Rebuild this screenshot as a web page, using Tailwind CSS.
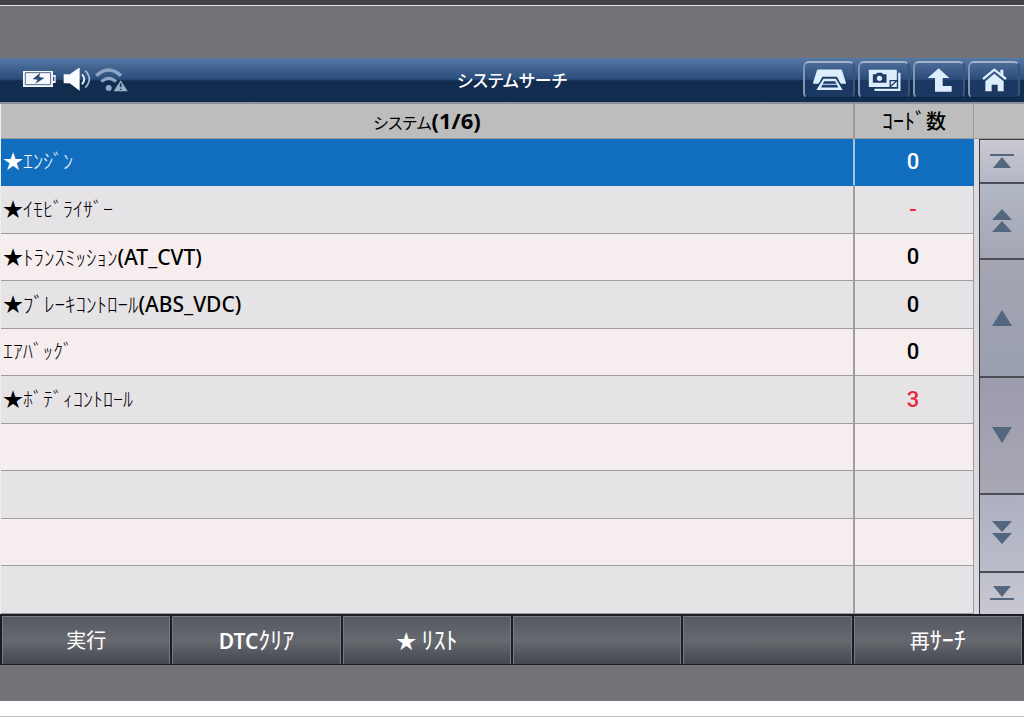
<!DOCTYPE html>
<html lang="ja">
<head>
  <meta charset="UTF-8"/>
  <meta name="viewport" content="width=device-width, initial-scale=1.0"/>
  <title>システムサーチ</title>
  <script src="https://cdn.jsdelivr.net/npm/@tailwindcss/browser@4"></script>
</head>
<body class="flex min-h-screen flex-col bg-white font-['Noto_Sans','Noto_Sans_CJK_JP',sans-serif] text-black">
  <div class="h-[6px] border-b border-[#e4e4e4] bg-[#424143]"></div>
  <div class="bg-[#727377] pt-[52px] pb-[36px]">

    <!-- title bar -->
    <header class="grid h-[46px] grid-cols-[1fr_auto_1fr] items-center border-b-2 border-[#8b9099] bg-linear-to-b from-[#5578a4] from-0% via-[#2a4d7b] via-48% to-[#122c50] to-52%">
      <div class="flex h-full items-center gap-[7px] pl-[22px]">
        <svg class="h-[18px] w-[34px]" viewBox="66 212 102 54" role="img" aria-label="バッテリー">
          <path d="M69 210h90v14h8v24h-8v12H69z" fill="#f4f8fc"/>
          <path d="M76 217h76v36H76z" fill="none" stroke="#54698a" stroke-width="3"/>
          <path d="M159 229h4v13h-4z" fill="#34507a"/>
          <path d="M120 218l-22 18 15 2-7 12 27-17-15-3z" fill="#2a4775"/>
        </svg>
        <svg class="h-[24px] w-[28px]" viewBox="190 201 84 72" role="img" aria-label="音量">
          <path d="M192 220h18l30-21v70l-30-22h-18z" fill="#f8fbff"/>
          <path d="M247 220q14 14 0 30" fill="none" stroke="#dfe9f5" stroke-width="6"/>
          <path d="M257 209q24 25 0 51" fill="none" stroke="#a9bcd4" stroke-width="5"/>
        </svg>
        <svg class="-ml-[3px] h-[24px] w-[33px]" viewBox="284 203 99 72" role="img" aria-label="Wi-Fi">
          <path d="M288 226q37-34 74 0" fill="none" stroke="#8ea5c3" stroke-width="10"/>
          <path d="M303 244q22-20 44 0" fill="none" stroke="#8ea5c3" stroke-width="9"/>
          <circle cx="325" cy="263" r="9" fill="#8ea5c3"/>
          <path d="M361 240l21 33h-42z" fill="#9bb0cb"/>
          <path d="M361 249v12M361 265v4" stroke="#1d3960" stroke-width="5"/>
        </svg>
      </div>
      <h1 class="pt-[2px] text-[17px] leading-[24px] font-medium text-white [font-feature-settings:'palt']">システムサーチ</h1>
      <nav class="flex justify-end gap-[3px] pr-[4px]">
        <button type="button" aria-label="印刷" class="flex h-[38px] w-[52px] items-center justify-center rounded-[6px] border-2 border-t-[#a3b4cb] border-r-[#3a5377] border-b-[#0e2444] border-l-[#8296b4] bg-linear-to-b from-[#4a6a97] from-0% via-[#2c4c7a] via-48% to-[#1b3862] to-52%">
          <svg class="h-[22px] w-[33px]" viewBox="70 60 98 64">
            <path d="M84 63h70l12 38H72z" fill="#dcedfb" stroke="#dcedfb" stroke-width="4" stroke-linejoin="round"/>
            <path d="M98 82h43l12 22H86z" fill="#1f3d69"/>
            <path d="M101 88h37l20 34H80z" fill="#dcedfb"/>
            <path d="M103 96h33l9 18H94z" fill="#1f3d69"/>
            <path d="M98 105h43" stroke="#a9c0da" stroke-width="4"/>
          </svg>
        </button>
        <button type="button" aria-label="画像保存" class="flex h-[38px] w-[52px] items-center justify-center rounded-[6px] border-2 border-t-[#a3b4cb] border-r-[#3a5377] border-b-[#0e2444] border-l-[#8296b4] bg-linear-to-b from-[#4a6a97] from-0% via-[#2c4c7a] via-48% to-[#1b3862] to-52%">
          <svg class="h-[23px] w-[33px]" viewBox="236 55 98 69">
            <path d="M326 66h7v55h-78v-7h71z" fill="#dcedfb"/>
            <path d="M240 57h80q2 0 2 2v50h-82q-2 0-2-2V59q0-2 2-2z" fill="#dcedfb"/>
            <path d="M250 71h9l4-5h14l4 5h10v25h-41z" fill="#1f3d69"/>
            <circle cx="270" cy="83" r="8" fill="#dcedfb"/>
            <path d="M302 108V90h20z" fill="#dcedfb" stroke="#1f3d69" stroke-width="4"/>
          </svg>
        </button>
        <button type="button" aria-label="戻る" class="flex h-[38px] w-[52px] items-center justify-center rounded-[6px] border-2 border-t-[#a3b4cb] border-r-[#3a5377] border-b-[#0e2444] border-l-[#8296b4] bg-linear-to-b from-[#4a6a97] from-0% via-[#2c4c7a] via-48% to-[#1b3862] to-52%">
          <svg class="h-[24px] w-[25px]" viewBox="418 52 75 72">
            <path d="M453 53l32 29h-20v24h27v17h-50V82h-22z" fill="#dcedfb"/>
          </svg>
        </button>
        <button type="button" aria-label="ホーム" class="flex h-[38px] w-[52px] items-center justify-center rounded-[6px] border-2 border-t-[#a3b4cb] border-r-[#3a5377] border-b-[#0e2444] border-l-[#8296b4] bg-linear-to-b from-[#4a6a97] from-0% via-[#2c4c7a] via-48% to-[#1b3862] to-52%">
          <svg class="h-[24px] w-[25px]" viewBox="578 52 75 72">
            <path d="M581 85l34-28 35 28" fill="none" stroke="#dcedfb" stroke-width="7"/>
            <path d="M633 57h9v20l-9-7z" fill="#dcedfb"/>
            <path d="M588 92l27-23 28 23v30h-18v-20h-18v20h-19z" fill="#dcedfb"/>
          </svg>
        </button>
      </nav>
    </header>

    <main class="flex bg-[#dcdade]">
      <table class="flex-1 table-fixed border-separate border-spacing-0 border-l border-[#eeeeee] text-[20px] leading-[24px]">
        <colgroup><col/><col class="w-[119px]"/></colgroup>
        <thead>
          <tr class="h-[35px] bg-[#bdbdbd]">
            <th class="border-r-2 border-b border-[#9b9b9b] p-0 text-[22px] font-bold"><span class="text-[16px] font-normal [font-feature-settings:'palt']">システム</span>(1/6)</th>
            <th class="border-r border-b border-[#9b9b9b] p-0 font-medium"><span class="text-[22px] font-normal">ｺｰﾄﾞ</span>数</th>
          </tr>
        </thead>
        <tbody>
          <tr class="h-[47px] bg-[#116dbe] text-white">
            <td class="border-r-2 border-b border-r-[#a9c4de] border-b-[#116dbe] p-0 pl-[2px] font-light">★ｴﾝｼﾞﾝ</td>
            <td class="border-r border-b border-[#116dbe] p-0 pr-[2px] text-center font-['Roboto'] text-[22px] font-medium">0</td>
          </tr>
          <tr class="h-[48px] bg-[#e6e3e7]">
            <td class="border-r-2 border-b border-[#9f9d9f] p-0 pl-[2px] font-light">★ｲﾓﾋﾞﾗｲｻﾞｰ</td>
            <td class="border-r border-b border-[#9f9d9f] p-0 pr-[2px] text-center font-['Roboto'] text-[22px] font-medium text-[#e8283a]">-</td>
          </tr>
          <tr class="h-[47px] bg-[#f6eeee]">
            <td class="border-r-2 border-b border-[#9f9d9f] p-0 pl-[2px] font-light">★<span class="text-[21px]">ﾄﾗﾝｽﾐｯｼｮﾝ<span class="font-medium">(AT_CVT)</span></span></td>
            <td class="border-r border-b border-[#9f9d9f] p-0 pr-[2px] text-center font-['Roboto'] text-[22px] font-medium">0</td>
          </tr>
          <tr class="h-[48px] bg-[#e6e3e7]">
            <td class="border-r-2 border-b border-[#9f9d9f] p-0 pl-[2px] font-light">★<span class="text-[21px]">ﾌﾞﾚｰｷｺﾝﾄﾛｰﾙ<span class="font-medium">(ABS_VDC)</span></span></td>
            <td class="border-r border-b border-[#9f9d9f] p-0 pr-[2px] text-center font-['Roboto'] text-[22px] font-medium">0</td>
          </tr>
          <tr class="h-[47px] bg-[#f6eeee]">
            <td class="border-r-2 border-b border-[#9f9d9f] p-0 pl-[2px] font-light">ｴｱﾊﾞｯｸﾞ</td>
            <td class="border-r border-b border-[#9f9d9f] p-0 pr-[2px] text-center font-['Roboto'] text-[22px] font-medium">0</td>
          </tr>
          <tr class="h-[48px] bg-[#e6e3e7]">
            <td class="border-r-2 border-b border-[#9f9d9f] p-0 pl-[2px] font-light">★ﾎﾞﾃﾞｨｺﾝﾄﾛｰﾙ</td>
            <td class="border-r border-b border-[#9f9d9f] p-0 pr-[2px] text-center font-['Roboto'] text-[22px] font-medium text-[#e8283a]">3</td>
          </tr>
          <tr class="h-[47px] bg-[#f6eeee]">
            <td class="border-r-2 border-b border-[#9f9d9f]"></td>
            <td class="border-r border-b border-[#9f9d9f]"></td>
          </tr>
          <tr class="h-[48px] bg-[#e6e3e7]">
            <td class="border-r-2 border-b border-[#9f9d9f]"></td>
            <td class="border-r border-b border-[#9f9d9f]"></td>
          </tr>
          <tr class="h-[47px] bg-[#f6eeee]">
            <td class="border-r-2 border-b border-[#9f9d9f]"></td>
            <td class="border-r border-b border-[#9f9d9f]"></td>
          </tr>
          <tr class="h-[48px] bg-[#e6e3e7]">
            <td class="border-r-2 border-b border-[#9f9d9f]"></td>
            <td class="border-r border-b border-[#9f9d9f]"></td>
          </tr>
        </tbody>
      </table>

      <!-- scroll buttons -->
      <div class="flex w-[50px] flex-col">
        <div class="h-[35px] border-b border-[#9b9b9b] bg-[#bdbdbd]"></div>
        <div class="ml-[5px] flex flex-1 flex-col border-t border-l border-[#3c3d42]">
          <button type="button" aria-label="先頭へ" class="flex flex-[43] items-center justify-center border-b-2 border-[#4c4e55] bg-linear-to-b from-[#c9c8d2] to-[#b4b8c6]">
            <svg class="h-[14px] w-[24px]" viewBox="0 0 24 14" fill="#54677f"><path d="M0 0h24v2H0zM12 3l9 11H3z"/></svg>
          </button>
          <button type="button" aria-label="前のページ" class="flex flex-[75] items-center justify-center border-b-2 border-[#4c4e55] bg-linear-to-b from-[#b3b8c5] to-[#a3a5b3]">
            <svg class="h-[24px] w-[20px]" viewBox="0 0 20 24" fill="#54677f"><path d="M10 0l10 11H0zM10 12l10 11H0z"/></svg>
          </button>
          <button type="button" aria-label="上へ" class="flex flex-[118] items-center justify-center border-b-2 border-[#4c4e55] bg-linear-to-b from-[#a5a5b2] to-[#999faf]">
            <svg class="h-[16px] w-[20px]" viewBox="0 0 20 16" fill="#54677f"><path d="M10 0l10 16H0z"/></svg>
          </button>
          <button type="button" aria-label="下へ" class="flex flex-[118] items-center justify-center border-b-2 border-[#4c4e55] bg-linear-to-b from-[#9b9bad] to-[#a8a8b4]">
            <svg class="h-[16px] w-[20px]" viewBox="0 0 20 16" fill="#54677f"><path d="M0 0h20L10 16z"/></svg>
          </button>
          <button type="button" aria-label="次のページ" class="flex flex-[77] items-center justify-center border-b-2 border-[#4c4e55] bg-linear-to-b from-[#aeb0bf] to-[#b9bdca]">
            <svg class="h-[24px] w-[20px]" viewBox="0 0 20 24" fill="#54677f"><path d="M0 0h20L10 11zM0 12h20L10 23z"/></svg>
          </button>
          <button type="button" aria-label="末尾へ" class="flex flex-[42] items-center justify-center bg-linear-to-b from-[#bdbfcb] to-[#c8c8d0]">
            <svg class="h-[14px] w-[24px]" viewBox="0 0 24 14" fill="#54677f"><path d="M3 0h18l-9 11zM0 12h24v2H0z"/></svg>
          </button>
        </div>
      </div>
    </main>

    <!-- function keys -->
    <div class="grid h-[51px] grid-cols-6 gap-[2px] border-2 border-b border-[#1b1d22] bg-[#1b1d22] text-[20px] leading-[24px] text-white">
      <button type="button" class="border-t border-r border-l border-[#777a80] bg-linear-to-b from-[#555962] via-[#67696f] to-[#44474d]">実行</button>
      <button type="button" class="border-t border-r border-l border-[#777a80] bg-linear-to-b from-[#555962] via-[#67696f] to-[#44474d]"><span class="text-[21px] font-semibold">DTC</span><span class="text-[24px]">ｸﾘｱ</span></button>
      <button type="button" class="border-t border-r border-l border-[#777a80] bg-linear-to-b from-[#555962] via-[#67696f] to-[#44474d]">★ <span class="text-[24px]">ﾘｽﾄ</span></button>
      <button type="button" aria-label="F4" class="border-t border-r border-l border-[#777a80] bg-linear-to-b from-[#555962] via-[#67696f] to-[#44474d]"></button>
      <button type="button" aria-label="F5" class="border-t border-r border-l border-[#777a80] bg-linear-to-b from-[#555962] via-[#67696f] to-[#44474d]"></button>
      <button type="button" class="border-t border-r border-l border-[#777a80] bg-linear-to-b from-[#555962] via-[#67696f] to-[#44474d]">再<span class="text-[24px]">ｻｰﾁ</span></button>
    </div>
  </div>
  <hr class="mt-[15px] border-[#bdbdbd]"/>
</body>
</html>
